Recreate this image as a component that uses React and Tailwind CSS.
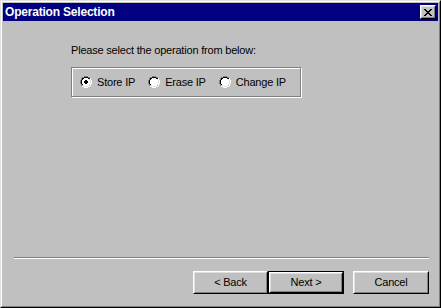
import React, { useState } from "react";

const font = { fontFamily: '"Liberation Sans", Arial, sans-serif' };

function Bevel({ children, className = "" }) {
  return (
    <div className={`border border-t-white border-l-white border-b-black border-r-black ${className}`}>
      <div className="h-full w-full border border-t-[#dfdfdf] border-l-[#dfdfdf] border-b-[#808080] border-r-[#808080] flex items-center justify-center">
        {children}
      </div>
    </div>
  );
}

function Radio({ checked, label, onClick }) {
  return (
    <button className="flex items-center gap-[5px] text-[11px] leading-[13px] tracking-[-0.2px] text-black" onClick={onClick}>
      <svg width="12" height="12" viewBox="0 0 12 12" shapeRendering="crispEdges">
        <path d="M4 0h4v1H4zM2 1h2v1H2zM8 1h2v1H8zM1 2h1v2H1zM0 4h1v4H0zM1 8h1v2H1z" fill="#808080" />
        <path d="M4 1h4v1H4zM2 2h2v1H2zM8 2h2v1H8zM2 3h1v1H2zM1 4h1v4H1zM2 8h1v1H2z" fill="#000" />
        <path d="M10 2h1v2h-1zM11 4h1v4h-1zM10 8h1v2h-1zM8 10h2v1H8zM2 10h2v1H2zM4 11h4v1H4z" fill="#fff" />
        <path d="M9 3h1v1H9zM10 4h1v4h-1zM9 8h1v1H9zM8 9h1v1H8zM3 9h1v1H3zM4 10h4v1H4z" fill="#dfdfdf" />
        <path d="M4 2h4v1H4zM3 3h6v1H3zM2 4h8v4H2zM3 8h6v1H3zM4 9h4v1H4z" fill="#fff" />
        {checked && <path d="M5 4h2v1H5zM4 5h4v2H4zM5 7h2v1H5z" fill="#000" />}
      </svg>
      <span>{label}</span>
    </button>
  );
}

export default function App() {
  const [op, setOp] = useState("store");
  return (
    <div style={font} className="w-[441px] h-[308px] border border-t-[#dfdfdf] border-l-[#dfdfdf] border-b-black border-r-black">
      <div className="h-full w-full border border-t-white border-l-white border-b-[#808080] border-r-[#808080] p-px flex flex-col bg-[#c0c0c0]">
        <div className="h-[18px] bg-[#000080] flex items-center justify-between pl-[2px] pr-[2px]">
          <span className="text-white font-bold text-[12px] leading-[14px] tracking-[-0.2px]">Operation Selection</span>
          <Bevel className="w-[16px] h-[14px] bg-[#c0c0c0]">
            <svg width="8" height="7" viewBox="0 0 8 7" shapeRendering="crispEdges">
              <path d="M0 0h2v1H0zM6 0h2v1H6zM1 1h2v1H1zM5 1h2v1H5zM2 2h4v1H2zM3 3h2v1H3zM2 4h4v1H2zM1 5h2v1H1zM5 5h2v1H5zM0 6h2v1H0zM6 6h2v1H6z" fill="#000" />
            </svg>
          </Bevel>
        </div>
        <div className="flex-1 flex flex-col">
          <div className="pl-[68px] pt-[23px]">
            <p className="text-[11px] leading-[13px] tracking-[-0.2px] text-black">Please select the operation from below:</p>
            <div className="mt-[10px] w-[230px] h-[30px] border border-[#808080] shadow-[inset_1px_1px_#fff,1px_1px_#fff] flex items-center gap-[13px] pl-[8px]">
              <Radio checked={op === "store"} label="Store IP" onClick={() => setOp("store")} />
              <Radio checked={op === "erase"} label="Erase IP" onClick={() => setOp("erase")} />
              <Radio checked={op === "change"} label="Change IP" onClick={() => setOp("change")} />
            </div>
          </div>
          <div className="flex-1" />
          <div className="ml-[11px] mr-[9px] h-[2px] border-t border-t-[#808080] border-b border-b-white" />
          <div className="flex justify-end mt-[12px] mb-[11px] mr-[9px] text-[11px] tracking-[-0.2px] text-black">
            <Bevel className="w-[75px] h-[23px] bg-[#c0c0c0]">&lt; Back</Bevel>
            <div className="w-[76px] h-[23px] border border-black">
              <Bevel className="w-full h-full">Next &gt;</Bevel>
            </div>
            <Bevel className="ml-[9px] w-[76px] h-[23px]">Cancel</Bevel>
          </div>
        </div>
      </div>
    </div>
  );
}
